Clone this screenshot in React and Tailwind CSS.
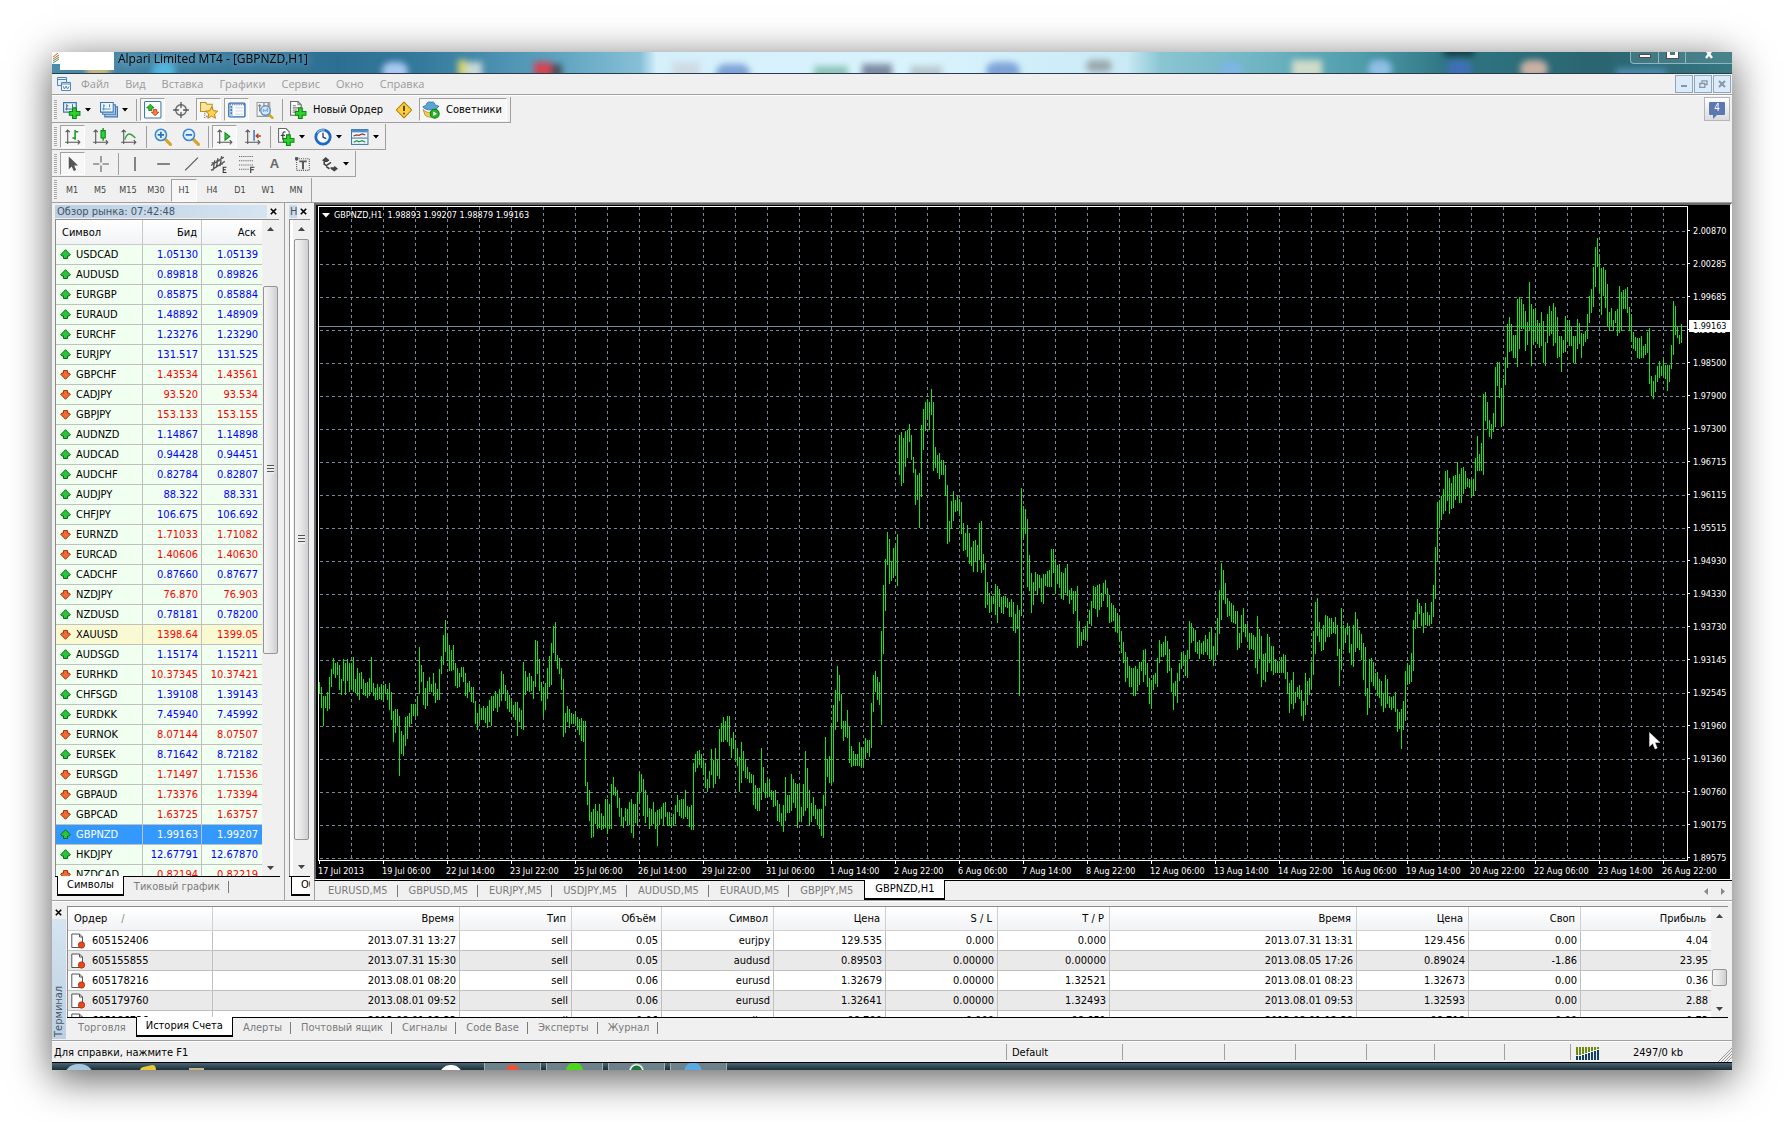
import { useState } from 'react';

const symbols = [
  ['USDCAD', '1.05130', '1.05139', 1],
  ['AUDUSD', '0.89818', '0.89826', 1],
  ['EURGBP', '0.85875', '0.85884', 1],
  ['EURAUD', '1.48892', '1.48909', 1],
  ['EURCHF', '1.23276', '1.23290', 1],
  ['EURJPY', '131.517', '131.525', 1],
  ['GBPCHF', '1.43534', '1.43561', 0],
  ['CADJPY', '93.520', '93.534', 0],
  ['GBPJPY', '153.133', '153.155', 0],
  ['AUDNZD', '1.14867', '1.14898', 1],
  ['AUDCAD', '0.94428', '0.94451', 1],
  ['AUDCHF', '0.82784', '0.82807', 1],
  ['AUDJPY', '88.322', '88.331', 1],
  ['CHFJPY', '106.675', '106.692', 1],
  ['EURNZD', '1.71033', '1.71082', 0],
  ['EURCAD', '1.40606', '1.40630', 0],
  ['CADCHF', '0.87660', '0.87677', 1],
  ['NZDJPY', '76.870', '76.903', 0],
  ['NZDUSD', '0.78181', '0.78200', 1],
  ['XAUUSD', '1398.64', '1399.05', 0],
  ['AUDSGD', '1.15174', '1.15211', 1],
  ['EURHKD', '10.37345', '10.37421', 0],
  ['CHFSGD', '1.39108', '1.39143', 1],
  ['EURDKK', '7.45940', '7.45992', 1],
  ['EURNOK', '8.07144', '8.07507', 0],
  ['EURSEK', '8.71642', '8.72182', 1],
  ['EURSGD', '1.71497', '1.71536', 0],
  ['GBPAUD', '1.73376', '1.73394', 0],
  ['GBPCAD', '1.63725', '1.63757', 0],
  ['GBPNZD', '1.99163', '1.99207', 1],
  ['HKDJPY', '12.67791', '12.67870', 1],
  ['NZDCAD', '0.82194', '0.82219', 0]
];

const orders = [
  ['605152406', '2013.07.31 13:27', 'sell', '0.05', 'eurjpy', '129.535', '0.000', '0.000', '2013.07.31 13:31', '129.456', '0.00', '4.04'],
  ['605155855', '2013.07.31 15:30', 'sell', '0.05', 'audusd', '0.89503', '0.00000', '0.00000', '2013.08.05 17:26', '0.89024', '-1.86', '23.95'],
  ['605178216', '2013.08.01 08:20', 'sell', '0.06', 'eurusd', '1.32679', '0.00000', '1.32521', '2013.08.01 08:23', '1.32673', '0.00', '0.36'],
  ['605179760', '2013.08.01 09:52', 'sell', '0.06', 'eurusd', '1.32641', '0.00000', '1.32493', '2013.08.01 09:53', '1.32593', '0.00', '2.88'],
  ['605186736', '2013.08.01 12:33', 'sell', '0.06', 'usdjpy', '98.790', '0.000', '98.651', '2013.08.01 12:38', '98.718', '0.00', '0.73']
];

const orderCols = ['Ордер', 'Время', 'Тип', 'Объём', 'Символ', 'Цена', 'S / L', 'T / P', 'Время', 'Цена', 'Своп', 'Прибыль'];
const orderWidths = ['w-[145px]', 'w-[247px]', 'w-[112px]', 'w-[90px]', 'w-[112px]', 'w-[112px]', 'w-[112px]', 'w-[112px]', 'w-[247px]', 'w-[112px]', 'w-[112px]', ''];

const prices = ['2.00870', '2.00285', '1.99685', '1.99085', '1.98500', '1.97900', '1.97300', '1.96715', '1.96115', '1.95515', '1.94930', '1.94330', '1.93730', '1.93145', '1.92545', '1.91960', '1.91360', '1.90760', '1.90175', '1.89575'];

const times = ['17 Jul 2013', '19 Jul 06:00', '22 Jul 14:00', '23 Jul 22:00', '25 Jul 06:00', '26 Jul 14:00', '29 Jul 22:00', '31 Jul 06:00', '1 Aug 14:00', '2 Aug 22:00', '6 Aug 06:00', '7 Aug 14:00', '8 Aug 22:00', '12 Aug 06:00', '13 Aug 14:00', '14 Aug 22:00', '16 Aug 06:00', '19 Aug 14:00', '20 Aug 22:00', '22 Aug 06:00', '23 Aug 14:00', '26 Aug 22:00'];

// high-low of every bar, in 0.8 pip steps below 2.0143
const quotes = `
1080-1107 1092-1137 1110-1178 1110-1138 1102-1145 1068-1140 1050-1092 1026-1062 1037-1070 1035-1063
1042-1098 1074-1108 1028-1078 1037-1108 1028-1078 1037-1103 1037-1095 1024-1103 1074-1105 1048-1110
1060-1121 1057-1095 1072-1108 1082-1110 1080-1115 1071-1110 1024-1103 1082-1110 1093-1121 1084-1121
1091-1117 1084-1119 1087-1124 1084-1107 1096-1121 1082-1142 1102-1165 1145-1214 1140-1194 1140-1178
1156-1290 1190-1240 1198-1245 1158-1222 1156-1207 1150-1180 1128-1174 1130-1156 1130-1158 1110-1155
1002-1107 1042-1080 1058-1131 1093-1140 1078-1133 1068-1103 1085-1103 1060-1110 1083-1127 1096-1121
1050-1121 1022-1062 974-1042 941-1012 972-1032 997-1054 1008-1055 997-1052 1038-1088 1048-1093
1060-1091 1046-1068 1046-1080 1060-1110 1082-1115 1077-1103 1091-1124 1091-1127 1122-1174 1150-1187
1130-1172 1138-1165 1133-1165 1138-1172 1133-1183 1120-1170 1112-1178 1112-1145 1100-1138 1107-1147
1096-1135 1055-1122 1062-1107 1087-1122 1098-1140 1109-1147 1115-1147 1131-1158 1124-1165 1124-1200
1138-1170 1142-1185 1035-1188 1055-1108 1068-1100 1060-1102 1067-1100 1077-1118 986-1090 988-1062
1028-1100 1080-1122 1091-1158 1082-1142 1048-1118 1022-1090 992-1087 954-1015 946-1032 1020-1050
1027-1062 1048-1097 1072-1202 1150-1195 1133-1170 1140-1183 1150-1174 1152-1174 1149-1174 1158-1187
1163-1198 1160-1212 1167-1214 1167-1312 1304-1355 1322-1390 1370-1430 1364-1427 1353-1398 1368-1410
1353-1407 1373-1412 1380-1408 1342-1407 1342-1420 1353-1410 1308-1408 1292-1333 1315-1335 1322-1362
1340-1382 1362-1403 1382-1407 1362-1390 1364-1400 1348-1400 1342-1418 1353-1430 1353-1395 1326-1402
1282-1353 1285-1325 1298-1380 1322-1395 1333-1382 1362-1408 1364-1400 1348-1398 1370-1410 1367-1446
1364-1400 1360-1387 1351-1402 1348-1382 1370-1402 1370-1403 1382-1407 1375-1403 1355-1398 1333-1370
1344-1380 1342-1385 1342-1387 1322-1382 1357-1387 1360-1405 1355-1412 1262-1412 1240-1282 1235-1272
1232-1265 1240-1272 1251-1287 1262-1317 1297-1327 1278-1317 1230-1287 1255-1318 1228-1308 1255-1290
1185-1297 1172-1215 1158-1215 1167-1210 1156-1215 1156-1222 1205-1250 1192-1230 1210-1252 1227-1268
1248-1327 1214-1305 1235-1278 1252-1295 1270-1297 1282-1305 1285-1305 1288-1355 1310-1364 1318-1368
1317-1368 1228-1343 1270-1327 1307-1340 1298-1337 1298-1337 1322-1343 1324-1360 1322-1357 1343-1392
1353-1393 1373-1403 1355-1415 1292-1392 1333-1373 1332-1373 1286-1368 1298-1350 1305-1362 1308-1406
1305-1390 1360-1393 1308-1380 1234-1368 1272-1363 1322-1402 1350-1393 1337-1380 1355-1387 1364-1400
1364-1408 1364-1425 1332-1430 1203-1357 1252-1293 1245-1305 1180-1308 1131-1303 1098-1188 1044-1170
1064-1122 1107-1185 1167-1212 1167-1203 1142-1205 1180-1262 1222-1270 1235-1268 1240-1268 1242-1267
1214-1268 1225-1272 1228-1270 1205-1253 1210-1238 1210-1248 1127-1228 1064-1147 1055-1102 1068-1120
1080-1131 965-1176 862-1018 804-920 744-818 760-860 810-853 780-847 775-840 748-864
526-617 520-640 533-633 517-597 515-578 502-542 526-582 576-612 602-683 617-672
612-735 504-665 468-560 452-517 445-490 452-515 423-482 452-607 553-600 571-612
567-625 582-617 582-615 594-662 638-770 718-766 674-738 652-720 672-700 664-697
670-703 677-748 724-786 746-785 728-800 746-815 777-820 764-833 762-810 773-833
724-806 719-836 793-828 813-915 856-908 880-925 887-922 887-905 860-930 865-948
871-912 889-925 887-927 887-912 892-915 900-935 893-935 900-965 927-970 908-962
918-1110 645-932 685-758 692-748 715-867 795-876 836-925 856-908 833-875 838-885
840-870 847-900 838-905 838-865 831-867 829-867 782-867 782-836 804-882 818-860
815-870 833-893 836-895 824-880 815-887 874-905 869-895 876-927 876-920 865-1004
942-1000 967-1000 960-985 954-987 942-985 918-950 898-955 865-915 867-917 862-934
860-918 880-912 858-898 851-882 869-912 885-948 903-945 908-942 915-968 925-970
932-990 965-1015 990-1037 1012-1080 1024-1070 1044-1092 1048-1090 1048-1112 1044-1112 1050-1100
1035-1087 1035-1055 1008-1080 1006-1065 1038-1092 1070-1130 1075-1140 1065-1097 1060-1085 1026-1090
986-1037 995-1024 990-1024 977-1020 988-1060 1006-1055 1048-1102 1083-1142 1077-1110 1060-1127
1037-1077 1012-1050 1015-1042 1020-1067 1008-1070 942-1028 948-992 958-987 963-1012 990-1018
986-1028 992-1018 988-1020 974-1012 983-1020 968-1028 956-1030 999-1044 977-1028 936-1020
874-972 813-940 829-895 858-905 892-935 898-932 903-945 907-948 920-950 920-1007
970-1004 930-992 914-968 950-980 950-988 970-1007 970-1005 974-1008 980-1048 932-1062
962-1028 977-1092 1018-1075 1015-1080 972-1057 979-1037 999-1055 999-1065 1028-1060 1033-1060
1033-1060 1024-1060 1017-1060 1020-1073 1058-1107 1082-1148 1075-1130 1058-1140 1102-1127 1091-1113
1086-1117 1098-1156 1122-1168 1060-1154 1078-1131 1071-1108 1035-1095 965-1064 900-1018 892-977
945-990 962-1010 952-1007 930-990 932-980 936-980 936-972 945-970 934-972 952-1022
1006-1088 914-1053 952-1007 958-992 948-975 954-1015 995-1042 952-1046 923-1012 939-1004
963-1007 972-1030 992-1075 1001-1110 1093-1154 1028-1138 1026-1080 1035-1088 1060-1093 1057-1110
1072-1115 1077-1133 1104-1146 1064-1138 1072-1128 1112-1138 1113-1142 1112-1138 1102-1147 1140-1192
1147-1185 1140-1229 1122-1187 1055-1168 1037-1086 1042-1085 1015-1080 940-1055 923-962 894-958
903-927 909-955 925-970 903-952 923-954 930-955 900-950 862-934 777-893 676-812
672-730 663-717 647-703 608-697 605-675 623-703 634-692 618-690 617-672 587-662
613-679 600-679 598-658 607-647 623-642 625-645 628-668 625-662 578-652 529-608
569-608 544-607 435-615 430-495 452-512 493-530 502-535 478-520 374-508 363-417
363-443 421-508 400-503 352-414 278-376 262-340 278-338 302-353 302-353 222-374
217-333 221-290 233-288 249-338 273-325 184-293 233-372 244-325 242-317 269-322
276-332 251-327 271-366 318-372 255-320 237-305 249-300 231-327 240-320 262-355
305-352 305-385 314-343 260-340 269-316 269-328 284-327 305-366 304-366 267-333
276-322 298-353 300-327 293-318 255-311 215-275 199-253 150-240 105-195 85-150
121-208 152-258 150-215 157-242 188-282 251-293 242-282 269-293 249-276 244-305
193-297 206-293 202-244 199-244 195-253 240-293 255-318 296-333 307-338 309-355
309-357 305-355 327-353 323-348 296-343 287-413 394-440 405-445 392-430 372-407
361-398 372-395 357-395 370-402 370-427 370-407 325-378 226-348 237-302 282-308
302-322 278-320`;

const toY = (v) => Math.round(v / 2.24) - 7;

const barsPath = quotes
  .trim()
  .split(/\s+/)
  .map((q, i) => {
    const [high, low] = q.split('-');
    return `M${i * 2 + 0.5} ${toY(high)}V${toY(low)}`;
  })
  .join('');

function Svg({ children }) {
  return (
    <svg width="18" height="18" viewBox="0 0 17 17" fill="none" aria-hidden="true" className="shrink-0">
      {children}
    </svg>
  );
}

const plus = <path d="M9 6.500h3.500v3.500h3.500v3.500h-3.500v3h-3.500v-3h-3v-3.500h3z" fill="#2fd12f" stroke="#0a8a12" />;

const icons = {
  newChart: (
    <Svg>
      <path d="M.5 1.500h12v9h-12z" fill="#e9f3fb" stroke="#3b78ad" strokeWidth="1.200" />
      <path d="M3.500 3v6M2 7.500h8M3 4.500h2M9 3v3" stroke="#3f6f9c" />
      {plus}
    </Svg>
  ),
  profiles: (
    <Svg>
      <path d="M4.500 5.500h12v9.500h-12z" fill="#a9cbe8" stroke="#3b78ad" />
      <path d="M2.500 3.500h12v9h-12z" fill="#c8dff1" stroke="#3b78ad" />
      <path d="M.5 1.500h12v9h-12z" fill="#eef6fc" stroke="#3b78ad" />
      <path d="M3.500 3v6M2 7.500h8M3 4.500h2M9 3v3" stroke="#5f8fb8" />
    </Svg>
  ),
  market: (
    <Svg>
      <rect x=".5" y=".5" width="15.500" height="15.500" rx="1" fill="#fff" stroke="#3b78ad" />
      <path d="M6 3l3.500 3.500H7.500V9h-3V6.500h-2z" fill="#2fc52f" stroke="#0a7a12" strokeWidth=".8" />
      <path d="M10.500 14L7 10.500h2V8h3v2.500h2z" fill="#ff7a45" stroke="#c43a10" strokeWidth=".8" />
    </Svg>
  ),
  crosshair: (
    <Svg>
      <circle cx="8.500" cy="8.500" r="5" stroke="#666" strokeWidth="1.300" />
      <path d="M8.500 1v5.500M8.500 10.500V16M1 8.500h5.500M10.500 8.500H16" stroke="#555" strokeWidth="1.200" />
    </Svg>
  ),
  favorites: (
    <Svg>
      <path d="M.5 3V1.500h5l1 1.500h5v7h-11z" fill="#fbe69a" stroke="#b89030" />
      <path d="M4.500 11v6M6 14.500h2" stroke="#555" strokeDasharray="1 1" />
      <path d="M11 5.500l1.700 3.700 4 .4-3 2.700.9 4-3.600-2.100-3.600 2.100.9-4-3-2.700 4-.4z" fill="#ffd44a" stroke="#b87a10" strokeWidth=".9" />
    </Svg>
  ),
  navigator: (
    <Svg>
      <rect x=".8" y="2" width="15.200" height="13" rx="1" fill="#fff" stroke="#2a6cb4" strokeWidth="1.300" />
      <path d="M1.500 4.500h3v10h-3z" fill="#a8cbee" />
      <path d="M2.500 5.500h1M2.500 8.500h1M2.500 11.500h1" stroke="#102a50" strokeWidth="1.200" />
      <path d="M6.500 6.500h8M6.500 9.500h8M6.500 12.500h8" stroke="#ccdcec" />
      <path d="M2 3.500h13" stroke="#1d3f70" strokeDasharray="1 1" />
    </Svg>
  ),
  tester: (
    <Svg>
      <path d="M1 1.500h12v13H1z" fill="#f4f4f4" stroke="#999" />
      <path d="M3.500 3v7M2 4.500h3M7.500 2v3M11.500 2v4" stroke="#777" />
      <path d="M12 12.500l3.500 3.500" stroke="#d9a520" strokeWidth="2.400" strokeLinecap="round" />
      <circle cx="9" cy="9" r="4.500" fill="#cfe5f8" fillOpacity=".85" stroke="#5b93c7" strokeWidth="1.300" />
      <path d="M7 10.500V8l2 1.500 2-2.500v3.500" stroke="#7ba6d0" />
    </Svg>
  ),
  newOrder: (
    <Svg>
      <path d="M1.500.5h7l3 3v10h-10z" fill="#fff" stroke="#666" />
      <path d="M8.500.5v3h3M3.500 4.500h3M3.500 6.500h6M3.500 8.500h4M3.500 10.500h3" stroke="#777" />
      {plus}
    </Svg>
  ),
  warning: (
    <Svg>
      <path d="M8.500 1l7.300 7.500-7.300 7.500L1.200 8.500z" fill="#ffcf33" stroke="#a87a10" strokeLinejoin="round" />
      <path d="M8.500 4.500v5M8.500 11v1.500" stroke="#333" strokeWidth="1.600" />
    </Svg>
  ),
  experts: (
    <Svg>
      <path d="M1 8c3 3.500 8 4 13 0l1.500 4.500c-2 3-9 4-12.500 1z" fill="#f0cf62" stroke="#b18b26" strokeWidth=".8" />
      <path d="M.8 5.500C2 4.500 3.500 4.800 4 3.500 4.600.8 7 .5 8.500 1.200 10 .4 12 1 12.300 3.500c.7 1 2.500.6 3.500 1.300-1 4.200-12.500 5-15 .7z" fill="#5aa5d8" stroke="#28709f" strokeWidth=".8" />
      <circle cx="12" cy="12" r="4.200" fill="#27b327" stroke="#108010" />
      <path d="M10.700 9.800v4.400l3.500-2.200z" fill="#fff" />
    </Svg>
  ),
  bars: (
    <Svg>
      <path d="M3.500 15V2M1.500 4l2-2 2 2M1 13.500h13M13 11.500l2 2-2 2" stroke="#555" />
      <path d="M10.500 2v9M10.500 3.500h3M8 9.500h2.500" stroke="#0d9a1d" strokeWidth="1.400" />
    </Svg>
  ),
  candles: (
    <Svg>
      <path d="M3.500 15V2M1.500 4l2-2 2 2M1 13.500h13M13 11.500l2 2-2 2" stroke="#555" />
      <path d="M10.500 0v12" stroke="#0b7a16" strokeWidth="1.200" />
      <path d="M8.500 2.500h4v7h-4z" fill="#32d13d" stroke="#0b8a16" />
    </Svg>
  ),
  line: (
    <Svg>
      <path d="M3.500 15V2M1.500 4l2-2 2 2M1 13.500h13M13 11.500l2 2-2 2" stroke="#555" />
      <path d="M4.500 11c2-6 4.500-7.500 10-1.500" stroke="#2ba23a" strokeWidth="1.300" />
    </Svg>
  ),
  zoomIn: (
    <Svg>
      <path d="M10.500 10.500l5 5" stroke="#d8a32a" strokeWidth="3" strokeLinecap="round" />
      <circle cx="6.500" cy="6.500" r="5.300" fill="#dff0ff" stroke="#3f87cf" strokeWidth="1.500" />
      <path d="M3.500 6.500h6M6.500 3.500v6" stroke="#2a70bd" strokeWidth="1.600" />
    </Svg>
  ),
  zoomOut: (
    <Svg>
      <path d="M10.500 10.500l5 5" stroke="#d8a32a" strokeWidth="3" strokeLinecap="round" />
      <circle cx="6.500" cy="6.500" r="5.300" fill="#dff0ff" stroke="#3f87cf" strokeWidth="1.500" />
      <path d="M3.500 6.500h6" stroke="#2a70bd" strokeWidth="1.600" />
    </Svg>
  ),
  autoScroll: (
    <Svg>
      <path d="M3.500 15V2M1.500 4l2-2 2 2M1 13.500h13M13 11.500l2 2-2 2" stroke="#555" />
      <path d="M8.500 4.500v7l4.500-3.500z" fill="#3dc54a" stroke="#0b8a16" />
    </Svg>
  ),
  shift: (
    <Svg>
      <path d="M3.500 15V2M1.500 4l2-2 2 2M1 13.500h13M13 11.500l2 2-2 2" stroke="#555" />
      <path d="M9.500 2v10" stroke="#2a6cb4" strokeWidth="1.300" />
      <path d="M16 7.500h-4M13.500 5.500l-2 2 2 2" stroke="#b8431b" strokeWidth="1.300" />
    </Svg>
  ),
  indicators: (
    <Svg>
      <path d="M1.500.5h7l3 3v10h-10z" fill="#fff" stroke="#666" />
      <path d="M8 4c-2-.8-2.500.5-2.500 2v5M3.500 7h4" stroke="#444" strokeWidth="1.200" />
      {plus}
    </Svg>
  ),
  clock: (
    <Svg>
      <circle cx="8.500" cy="8.500" r="6.800" fill="#f3f9ff" stroke="#1d6ac4" strokeWidth="2.600" />
      <path d="M8.500 4.500v4l3 1.500" stroke="#333" strokeWidth="1.200" />
      <path d="M3 5a6.500 6.500 0 0 1 7-3" stroke="#8fc4f5" />
    </Svg>
  ),
  template: (
    <Svg>
      <rect x=".5" y="1.500" width="15.500" height="14" fill="#f2f8fd" stroke="#3b78ad" />
      <path d="M1 3h14.500" stroke="#4d8fce" strokeWidth="2.200" />
      <path d="M1 9.500h14.500" stroke="#3b78ad" />
      <path d="M2.500 7.500l3-1 2 .5 3-1.500 3 1" stroke="#a33a20" strokeWidth="1.200" />
      <path d="M2.500 13.500l3-1.500 2 1 3-1 3 1.500" stroke="#1f8f3c" strokeWidth="1.200" />
    </Svg>
  ),
  pointer: (
    <Svg>
      <path d="M4.500 1.500v12l2.800-2.600 1.900 4.300 2.300-1-1.900-4.200h3.700z" fill="#555" />
    </Svg>
  ),
  cross: (
    <Svg>
      <path d="M8.500 1v6M8.500 10v6M1 8.500h6M10 8.500h6" stroke="#555" />
    </Svg>
  ),
  vline: (
    <Svg>
      <path d="M8.500 2v13" stroke="#444" strokeWidth="1.200" />
    </Svg>
  ),
  hline: (
    <Svg>
      <path d="M3 8.500h12" stroke="#444" strokeWidth="1.200" />
    </Svg>
  ),
  trend: (
    <Svg>
      <path d="M3 14.500L15 2.500" stroke="#555" strokeWidth="1.100" />
    </Svg>
  ),
  channel: (
    <Svg>
      <path d="M1 10L13 2M1 14.500L14 6M4.500 5l-1.500 9.500M7.500 3L6 12M11 1L9.500 10.500M1.500 7.500h3M6 5.500h3M9 8.500h3" stroke="#555" strokeWidth="1.200" />
      <path d="M15.500 11.500H12.500v5h3M12.500 14h2.500" stroke="#333" />
    </Svg>
  ),
  fibo: (
    <Svg>
      <path d="M1 1.500h14M1 5.500h14M1 9.500h14M1 13.500h9" stroke="#555" strokeDasharray="1 1" />
      <path d="M15.500 11.500h-3.500V17M12 14h3" stroke="#333" />
    </Svg>
  ),
  textLabel: (
    <Svg>
      <path d="M2.500 3.500h12v11h-12z" stroke="#555" strokeDasharray="1 1" />
      <path d="M1 2h3v3h-3z" fill="#555" />
      <path d="M5 6h7M8.500 6v7.500" stroke="#555" strokeWidth="1.800" />
    </Svg>
  ),
  arrows: (
    <Svg>
      <path d="M1 5l3.500-3L8 5 6 6.500H3zM9 11.500h3l1-1 3 2.500-3.500 2.500-3.500-2.500z" fill="#444" />
      <path d="M3 6.500v2l2 1.500 4.500-3M8 13l-3-2" stroke="#444" strokeWidth="1.500" />
    </Svg>
  )
};

function Caret() {
  return (
    <svg width="6" height="4" viewBox="0 0 6 4" aria-hidden="true" className="shrink-0">
      <path d="M0 0h6L3 3.500z" fill="#000" />
    </svg>
  );
}

function Tool({ name, label, active }) {
  return (
    <button
      type="button"
      aria-label={label}
      className={`${active ? 'border-[#a0a0a0] border-r-white border-b-white bg-[#f7f7f7]' : 'border-transparent'} mr-[3px] flex h-[23px] w-[25px] items-center justify-center border`}
    >
      {icons[name]}
    </button>
  );
}

function DropTool({ name, label }) {
  return (
    <button type="button" aria-label={label} className="flex h-[23px] w-[37px] items-center gap-[4px] pl-[3px]">
      {icons[name]}
      <Caret />
    </button>
  );
}

function Sep() {
  return <span className="mr-[3px] ml-[2px] h-[22px] w-px bg-[#a0a0a0]" />;
}

function Toolbar({ label, children }) {
  return (
    <div role="toolbar" aria-label={label} className="mb-px flex h-[26px] w-fit items-center border-r border-b border-[#a0a0a0]">
      <span className="mr-[3px] ml-[2px] h-[20px] w-[3px] bg-[repeating-linear-gradient(to_bottom,#a8a8a8_0_1px,#f0f0f0_1px_2px)]" />
      {children}
    </div>
  );
}

function CloseMark({ label }) {
  return (
    <button type="button" aria-label={label} className="flex h-[13px] w-[13px] shrink-0 items-center justify-center">
      <svg width="7" height="7" viewBox="0 0 7 7" aria-hidden="true">
        <path d="M.8.8l5.400 5.400M6.200.8L.8 6.200" stroke="#000" strokeWidth="1.600" />
      </svg>
    </button>
  );
}

function TrendArrow({ up }) {
  return (
    <svg width="11" height="11" viewBox="0 0 11 11" aria-hidden="true" className={up ? 'shrink-0' : 'shrink-0 rotate-180'}>
      <path d="M5.500.7L10.400 5.800 9 7H7.500v2.500h-4V7H2L.6 5.800z" fill={up ? '#2cc43c' : '#f06a35'} stroke={up ? '#0c6d18' : '#a8300c'} />
    </svg>
  );
}

function Scrollbar({ before, thumb, after, grip }) {
  return (
    <div className="flex w-[17px] shrink-0 flex-col items-center bg-[#f0f0f0]">
      <span className="flex h-[17px] items-center">
        <svg width="7" height="4" viewBox="0 0 7 4" aria-hidden="true">
          <path d="M0 4h7L3.500 0z" fill="#444" />
        </svg>
      </span>
      <span className={before} />
      <span className={`${thumb} flex w-[15px] flex-col items-center justify-center gap-px rounded-[2px] border border-[#959595] bg-linear-to-r from-[#f5f5f5] via-[#e6e6e8] to-[#cfcfd3]`}>
        {grip ? (
          <span className="h-[9px] w-[7px] bg-[repeating-linear-gradient(to_bottom,#555_0_1px,#eee_1px_3px)]" />
        ) : null}
      </span>
      <span className={after} />
      <span className="flex h-[17px] items-center">
        <svg width="7" height="4" viewBox="0 0 7 4" aria-hidden="true">
          <path d="M0 0h7L3.500 4z" fill="#444" />
        </svg>
      </span>
    </div>
  );
}

function Tabs({ items, value, onChange, label, wide }) {
  return (
    <div role="tablist" aria-label={label} className="flex h-[19px] shrink-0 gap-px">
      {items.map((t, i) => {
        const active = t === value;
        const nextActive = items[i + 1] === value;
        return (
          <button
            key={t}
            type="button"
            role="tab"
            aria-selected={active}
            onClick={() => onChange(t)}
            className={`${active ? '-mt-px h-[20px] border-x border-b-2 border-black bg-white text-black' : 'h-[20px] text-[#7a7a7a]'} ${wide ? 'px-[10px]' : 'px-[9px]'} relative flex shrink-0 items-center whitespace-nowrap`}
          >
            {t}
            {!active && !nextActive ? <span className="absolute top-[4px] right-0 h-[12px] w-px bg-[#7a7a7a]" /> : null}
          </button>
        );
      })}
    </div>
  );
}

function TitleBar() {
  return (
    <header className="relative flex h-[22px] shrink-0 items-start overflow-hidden border-b border-[#2b3b4d]">
      <div className="absolute inset-0 bg-[linear-gradient(to_right,#4a8ba9_0%,#2d6f93_17%,#337a9c_22%,#5ea2c0_30%,#86c0d6_35%,#d5f0fb_36%,#d9f3fd_52%,#c9eaf5_64%,#8ac5d2_66%,#6fb4c3_72%,#4f9cab_78%,#2f7684_83%,#2a6570_92%,#367782_100%)]" />
      <div className="absolute inset-0 blur-[3px]">
        <span className="absolute top-[10px] left-[330px] h-[18px] w-[26px] rounded-full bg-[#a9c9f2]" />
        <span className="absolute top-[10px] left-[100px] h-[18px] w-[24px] rounded-full bg-[#4fb6e0]" />
        <span className="absolute top-[12px] left-[34px] h-[14px] w-[24px] bg-[#c7b777]" />
        <span className="absolute top-[8px] left-[406px] h-[18px] w-[8px] bg-[#d8d36c]" />
        <span className="absolute top-[10px] left-[414px] h-[18px] w-[16px] bg-[#c9d8d8]" />
        <span className="absolute top-[10px] left-[482px] h-[18px] w-[18px] bg-[#d24552]" />
        <span className="absolute top-[12px] left-[500px] h-[18px] w-[10px] bg-[#44545e]" />
        <span className="absolute top-[10px] left-[620px] h-[18px] w-[28px] bg-[#cfdbe4]" />
        <span className="absolute top-[12px] left-[664px] h-[18px] w-[34px] rounded-full bg-[#7fa3d8]" />
        <span className="absolute top-[14px] left-[762px] h-[14px] w-[34px] bg-[#8fc5b8]" />
        <span className="absolute top-[12px] left-[810px] h-[18px] w-[30px] bg-[#7d8ba3]" />
        <span className="absolute top-[14px] left-[858px] h-[14px] w-[32px] bg-[#b9c8cf]" />
        <span className="absolute top-[10px] left-[934px] h-[18px] w-[34px] rounded-full bg-[#7fa3d8]" />
        <span className="absolute top-[8px] left-[1034px] h-[12px] w-[26px] rounded-full bg-[#9aa9ae]" />
        <span className="absolute top-[10px] left-[1168px] h-[18px] w-[22px] rounded-full bg-[#7db6e6]" />
        <span className="absolute top-[8px] left-[1240px] h-[18px] w-[30px] bg-[#cfdcc8]" />
        <span className="absolute top-[8px] left-[1316px] h-[18px] w-[24px] rounded-full bg-[#8fc0e6]" />
        <span className="absolute -top-[6px] left-[1392px] h-[10px] w-[30px] bg-[#123c44]" />
        <span className="absolute top-[8px] left-[1394px] h-[18px] w-[26px] rounded-full bg-[#3f6fb5]" />
        <span className="absolute top-[8px] left-[1468px] h-[18px] w-[28px] rounded-full bg-[#c9b0a4]" />
        <span className="absolute top-[16px] left-[1564px] h-[10px] w-[50px] bg-[#4d8cb0]" />
      </div>
      <svg width="8" height="12" viewBox="0 0 8 12" aria-hidden="true" className="relative bg-white">
        <path d="M1 5l5-4M1 7l6-4" stroke="#d9533a" />
        <path d="M1 9l6-4M1 11l6-4" stroke="#4a9a3c" />
      </svg>
      <span className="relative h-[18px] w-[54px] bg-white" />
      <h1 className="relative pl-[4px] font-['Open_Sans','Noto_Sans',sans-serif] text-[12px] leading-[14px] whitespace-nowrap text-black [text-shadow:0_0_8px_#b9dbea]">
        Alpari Limited MT4 - [GBPNZD,H1]
      </h1>
      <div className="relative ml-auto flex h-[12px] overflow-hidden rounded-bl-[4px] border-b border-l border-[#8fb6ba] bg-[#ffffff18] text-white">
        <button type="button" aria-label="Свернуть окно" className="flex w-[28px] justify-center border-r border-[#8fb6ba]">
          <span className="mt-[2px] h-[4px] w-[12px] border border-[#55475a] bg-white" />
        </button>
        <button type="button" aria-label="Развернуть окно" className="flex w-[27px] justify-center border-r border-[#8fb6ba]">
          <span className="-mt-[3px] h-[9px] w-[11px] border-[3px] border-white outline outline-[#55475a]" />
        </button>
        <button type="button" aria-label="Закрыть окно" className="flex w-[46px] justify-center">
          <svg width="10" height="8" viewBox="0 0 10 8" aria-hidden="true">
            <path d="M2-2l6 8M8-2L2 6" stroke="#fff" strokeWidth="2.400" />
          </svg>
        </button>
      </div>
    </header>
  );
}

function MenuBar() {
  const menu = ['Файл', 'Вид', 'Вставка', 'Графики', 'Сервис', 'Окно', 'Справка'];
  return (
    <nav className="flex h-[21px] shrink-0 items-center border-b border-[#a0a0a0] pr-px pl-[5px] font-['Open_Sans','Noto_Sans',sans-serif] text-[11px] text-[#9a9a9a]">
      <svg width="14" height="14" viewBox="0 0 14 14" fill="none" aria-hidden="true" className="mr-[2px]">
        <path d="M.5.5h9v8h-9z" fill="#e6f1fb" stroke="#4d87bd" />
        <path d="M4.500 5.500h9v8h-9z" fill="#fff" stroke="#4d87bd" />
        <path d="M.5 2.500h9M4.500 7h9" stroke="#4d87bd" />
        <path d="M6 9l1.500 3L9 9l1.500 3L12 9.500" stroke="#4d87bd" />
      </svg>
      {menu.map((m) => (
        <button key={m} type="button" className="px-[8px]">
          {m}
        </button>
      ))}
      <div className="ml-auto flex gap-px">
        <button type="button" aria-label="Свернуть" className="flex h-[18px] w-[18px] items-center justify-center border border-[#8fa6bd] bg-[#dcebfa]">
          <span className="mt-[4px] h-[2px] w-[6px] bg-[#8496a9]" />
        </button>
        <button type="button" aria-label="Восстановить" className="flex h-[18px] w-[18px] items-center justify-center border border-[#8fa6bd] bg-[#dcebfa]">
          <svg width="9" height="8" viewBox="0 0 9 8" fill="none" aria-hidden="true">
            <path d="M3 3V.8h5v3.700H6M.8 3.500h5V7.300h-5z" stroke="#8496a9" strokeWidth="1.300" />
          </svg>
        </button>
        <button type="button" aria-label="Закрыть" className="flex h-[18px] w-[18px] items-center justify-center border border-[#8fa6bd] bg-[#dcebfa]">
          <svg width="8" height="8" viewBox="0 0 8 8" aria-hidden="true">
            <path d="M1 1l6 6M7 1L1 7" stroke="#8496a9" strokeWidth="2" />
          </svg>
        </button>
      </div>
    </nav>
  );
}

function Toolbars() {
  const [period, setPeriod] = useState('H1');
  return (
    <div className="flex shrink-0 items-start justify-between border-t border-white pt-px">
      <div>
        <Toolbar label="Стандартная">
          <DropTool name="newChart" label="Новый график" />
          <DropTool name="profiles" label="Профили" />
          <Sep />
          <Tool name="market" label="Обзор рынка" active />
          <Tool name="crosshair" label="Окно данных" />
          <Tool name="favorites" label="Навигатор" active />
          <Tool name="navigator" label="Терминал" active />
          <Tool name="tester" label="Тестер стратегий" />
          <Sep />
          <button type="button" className="mr-[3px] flex h-[23px] w-[102px] items-center gap-[6px] pl-[3px] whitespace-nowrap">
            {icons.newOrder}
            Новый Ордер
          </button>
          <Tool name="warning" label="MetaEditor" />
          <button type="button" className="mr-[3px] flex h-[23px] w-[88px] items-center gap-[6px] border border-[#a0a0a0] border-r-white border-b-white bg-[#f7f7f7] pl-[2px] whitespace-nowrap">
            {icons.experts}
            Советники
          </button>
        </Toolbar>
        <Toolbar label="Графики">
          <Tool name="bars" label="Бары" active />
          <Tool name="candles" label="Японские свечи" />
          <Tool name="line" label="Линия" />
          <Sep />
          <Tool name="zoomIn" label="Увеличить" />
          <Tool name="zoomOut" label="Уменьшить" />
          <Sep />
          <Tool name="autoScroll" label="Автопрокрутка" active />
          <Tool name="shift" label="Сдвиг графика" />
          <Sep />
          <DropTool name="indicators" label="Индикаторы" />
          <DropTool name="clock" label="Периоды" />
          <DropTool name="template" label="Шаблоны" />
        </Toolbar>
        <Toolbar label="Графические инструменты">
          <Tool name="pointer" label="Курсор" active />
          <Tool name="cross" label="Перекрестие" />
          <Sep />
          <Tool name="vline" label="Вертикальная линия" />
          <Tool name="hline" label="Горизонтальная линия" />
          <Tool name="trend" label="Трендовая линия" />
          <Tool name="channel" label="Канал" />
          <Tool name="fibo" label="Линии Фибоначчи" />
          <button type="button" className="mr-[3px] h-[23px] w-[25px] font-['Liberation_Sans',sans-serif] text-[13px] font-bold text-[#666]">
            A
          </button>
          <Tool name="textLabel" label="Текстовая метка" />
          <DropTool name="arrows" label="Стрелки" />
        </Toolbar>
        <div role="toolbar" aria-label="Период" className="flex h-[24px] w-fit items-center border-r border-[#a0a0a0]">
          <span className="mr-[2px] ml-[2px] h-[20px] w-[3px] bg-[repeating-linear-gradient(to_bottom,#a8a8a8_0_1px,#f0f0f0_1px_2px)]" />
          {['M1', 'M5', 'M15', 'M30', 'H1', 'H4', 'D1', 'W1', 'MN'].map((p) => (
            <button
              key={p}
              type="button"
              onClick={() => setPeriod(p)}
              className={`${period === p ? 'border-[#a0a0a0] border-r-white border-b-white bg-[#f7f7f7]' : 'border-transparent'} mr-[2px] h-[23px] w-[26px] border text-[9px] text-[#444]`}
            >
              {p}
            </button>
          ))}
        </div>
      </div>
      <button type="button" aria-label="Сообщения: 4" className="mr-[2px] flex h-[24px] w-[26px] items-center justify-center border border-[#b4b4bc] bg-linear-to-b from-white to-[#dcdcdc]">
        <span className="relative -mt-[2px] flex h-[13px] w-[16px] items-center justify-center rounded-[1px] bg-[#5b78b3] text-[10px] leading-none text-white">
          4
          <span className="absolute top-full left-[4px] border-t-4 border-r-4 border-t-[#5b78b3] border-r-transparent" />
        </span>
      </button>
    </div>
  );
}

function MarketWatch() {
  const [tab, setTab] = useState('Символы');
  return (
    <section className="flex w-[233px] shrink-0 flex-col border-r border-[#a0a0a0] pt-[2px] pr-[4px] pl-[3px]">
      <div className="flex h-[13px] shrink-0 items-center justify-between">
        <h2 className="h-full flex-1 bg-linear-to-r from-[#bccfe0] to-[#d6e4f2] pl-[2px] leading-[13px] text-[#44546a]">Обзор рынка: 07:42:48</h2>
        <CloseMark label="Закрыть обзор рынка" />
      </div>
      <div className="mt-px mr-px flex min-h-0 flex-1 border-t border-l border-[#8c8c8c]">
        <div className="min-w-0 flex-1 overflow-hidden">
          <table className="w-full table-fixed border-separate border-spacing-0">
            <thead>
              <tr className="bg-linear-to-b from-white to-[#f0f2f5]">
                <th className="h-[25px] w-[87px] border-r border-b border-[#c8c8c8] pt-[2px] pl-[6px] text-left font-normal">Символ</th>
                <th className="w-[59px] border-r border-b border-[#c8c8c8] pt-[2px] pr-[4px] text-right font-normal">Бид</th>
                <th className="border-b border-[#c8c8c8] pt-[2px] pr-[6px] text-right font-normal">Аск</th>
              </tr>
            </thead>
            <tbody>
              {symbols.map(([name, bid, ask, up]) => {
                const selected = name === 'GBPNZD';
                const bg = selected ? 'bg-[#3399ff]' : name === 'XAUUSD' ? 'bg-[#fafad2]' : 'bg-[#f0fff0]';
                const color = selected ? 'text-white' : up ? 'text-[#0000ff]' : 'text-[#ff0000]';
                return (
                  <tr key={name} className={bg}>
                    <td className={`${selected ? 'text-white' : ''} h-[20px] border-r border-b border-[#c0c0c0] pl-[4px]`}>
                      <span className="flex items-center gap-[5px] leading-[16px]">
                        <TrendArrow up={up} />
                        {name}
                      </span>
                    </td>
                    <td className={`${color} border-r border-b border-[#c0c0c0] pr-[3px] text-right leading-[16px]`}>{bid}</td>
                    <td className={`${color} border-b border-[#c0c0c0] pr-[4px] text-right leading-[16px]`}>{ask}</td>
                  </tr>
                );
              })}
            </tbody>
          </table>
        </div>
        <Scrollbar before="flex-[49]" thumb="flex-[368]" after="flex-[206]" grip />
      </div>
      <div className="h-[24px] shrink-0 border-t border-black pl-[2px]">
        <Tabs label="Обзор рынка" items={['Символы', 'Тиковый график']} value={tab} onChange={setTab} />
      </div>
    </section>
  );
}

function Navigator() {
  return (
    <section className="flex w-[29px] shrink-0 flex-col overflow-hidden pt-[2px] pr-[4px] pl-[4px]">
      <div className="flex h-[13px] shrink-0 items-center">
        <h2 className="h-full w-[10px] bg-[#ccdbea] pl-px leading-[13px] text-[#44546a]">Н</h2>
        <CloseMark label="Закрыть навигатор" />
      </div>
      <div className="mt-px flex min-h-0 flex-1 justify-end border-t border-l border-[#8c8c8c] bg-white">
        <Scrollbar before="flex-[2]" thumb="flex-[602]" after="flex-[19]" grip />
      </div>
      <div className="h-[24px] shrink-0 overflow-hidden border-t border-black pl-[2px]">
        <span className="-mt-px flex h-[20px] w-[60px] items-center border-b-2 border-l border-black bg-white pl-[9px]">Общие</span>
      </div>
    </section>
  );
}

function Chart() {
  return (
    <div className="relative flex min-h-0 flex-1 flex-col overflow-hidden border-t-2 border-r-2 border-b border-l-2 border-t-[#6a6a6a] border-r-white border-b-white border-l-[#6a6a6a] bg-black pt-px pl-[2px] text-[9px] text-white">
      <div className="flex min-h-0 flex-1">
        <div className="relative min-w-0 flex-1 border border-white">
          <svg className="absolute inset-0 h-full w-full" shapeRendering="crispEdges" role="img" aria-label="График GBPNZD H1">
            <g stroke="#778899" strokeDasharray="3 3">
              {prices.map((p, i) => (
                <line key={p} x1="1" x2="100%" y1={i * 33 + 24.5} y2={i * 33 + 24.5} />
              ))}
              {Array.from({ length: 42 }, (_, i) => (
                <line key={i} x1={i * 32 + 32.5} x2={i * 32 + 32.5} y1="0" y2="100%" />
              ))}
            </g>
            <line x1="0" x2="100%" y1="119.5" y2="119.5" stroke="#778899" />
            <path d={barsPath} stroke="#10e810" />
          </svg>
          <p className="absolute top-px left-[3px] flex items-center gap-[4px] leading-[14px] whitespace-pre">
            <svg width="8" height="5" viewBox="0 0 8 5" aria-hidden="true">
              <path d="M0 0h8L4 4.500z" fill="#fff" />
            </svg>
            {'GBPNZD,H1  1.98893 1.99207 1.98879 1.99163'}
          </p>
        </div>
        <ul className="relative w-[42px] shrink-0 overflow-hidden pt-[8px]">
          {prices.map((p) => (
            <li key={p} className="flex h-[33px] items-center gap-[3px]">
              <span className="h-px w-[2px] bg-white" />
              {p}
            </li>
          ))}
          <li className="absolute top-[114px] right-0 left-[1px] h-[12px] bg-white pl-[4px] leading-[12px] text-black">1.99163</li>
        </ul>
      </div>
      <ul className="flex h-[18px] shrink-0">
        {times.map((t) => (
          <li key={t} className="w-[64px] shrink-0 whitespace-nowrap">
            <span className="ml-px block h-[3px] w-px bg-white" />
            <span className="block leading-[14px]">{t}</span>
          </li>
        ))}
      </ul>
      <svg width="12" height="18" viewBox="0 0 12 18" aria-hidden="true" className="absolute right-[69px] bottom-[129px]">
        <path d="M.5.5v14l3.300-3 2.200 5.500 2.300-1L6 10.500h5z" fill="#fff" stroke="#ddd" strokeWidth=".5" />
      </svg>
    </div>
  );
}

function Terminal() {
  const [tab, setTab] = useState('История Счета');
  return (
    <section className="flex h-[140px] shrink-0 border-t border-b border-t-white border-b-[#a0a0a0] pt-[4px]">
      <div className="flex w-[15px] shrink-0 flex-col">
        <CloseMark label="Закрыть терминал" />
        <div className="mb-px flex min-h-0 w-[14px] flex-1 items-center bg-linear-to-b from-[#d6e4f2] to-[#bccfe0]">
          <h2 className="h-full rotate-180 pt-[2px] leading-[14px] text-[#44546a] [writing-mode:vertical-rl]">Терминал</h2>
        </div>
      </div>
      <div className="flex min-w-0 flex-1 flex-col pr-[4px]">
        <div className="flex min-h-0 flex-1 border-t border-l border-[#8c8c8c] bg-white">
          <div className="min-w-0 flex-1 overflow-hidden">
            <table className="w-full table-fixed border-separate border-spacing-0">
              <thead>
                <tr className="bg-linear-to-b from-white to-[#f0f2f5]">
                  {orderCols.map((c, i) => (
                    <th
                      key={i}
                      className={`${orderWidths[i]} ${i ? 'pr-[5px] text-right' : 'pl-[6px] text-left'} ${i === 11 ? '' : 'border-r'} h-[24px] border-b border-[#d0d0d0] pt-px font-normal`}
                    >
                      {c}
                      {i ? null : <span className="ml-[14px] text-[#888]">/</span>}
                    </th>
                  ))}
                </tr>
              </thead>
              <tbody>
                {orders.map((row) => (
                  <tr key={row[0]} className="even:bg-[#eaeaea]">
                    {row.map((cell, i) => (
                      <td
                        key={i}
                        className={`${i ? 'pr-[3px] text-right' : 'pl-[3px]'} ${i === 11 ? '' : 'border-r'} h-[20px] border-b border-[#c0c0c0] leading-[16px]`}
                      >
                        {i ? (
                          cell
                        ) : (
                          <span className="flex items-center gap-[7px]">
                            <svg width="14" height="16" viewBox="0 0 14 16" fill="none" aria-hidden="true">
                              <path d="M.8 1h7.700l3 3v10.500H.8z" fill="#fff" stroke="#555" />
                              <path d="M8.500 1v3h3" stroke="#555" />
                              <circle cx="10.500" cy="12" r="3.200" fill="#e8481c" stroke="#9c2c0c" strokeWidth=".7" />
                            </svg>
                            {cell}
                          </span>
                        )}
                      </td>
                    ))}
                  </tr>
                ))}
              </tbody>
            </table>
          </div>
          <Scrollbar before="flex-[47]" thumb="flex-[15]" after="flex-[15]" />
        </div>
        <div className="h-[23px] shrink-0 border-t border-black pl-[2px]">
          <Tabs
            label="Терминал"
            items={['Торговля', 'История Счета', 'Алерты', 'Почтовый ящик', 'Сигналы', 'Code Base', 'Эксперты', 'Журнал']}
            value={tab}
            onChange={setTab}
          />
        </div>
      </div>
    </section>
  );
}

function StatusBar() {
  return (
    <footer className="flex h-[21px] shrink-0 items-stretch border-t border-white">
      <span className="flex flex-1 items-center pt-[2px] pl-[2px]">Для справки, нажмите F1</span>
      <span className="my-[2px] flex w-[116px] items-center border-l border-[#a0a0a0] pt-[2px] pl-[5px]">Default</span>
      <span className="my-[2px] w-[102px] border-l border-[#a0a0a0]" />
      <span className="my-[2px] w-[71px] border-l border-[#a0a0a0]" />
      <span className="my-[2px] w-[71px] border-l border-[#a0a0a0]" />
      <span className="my-[2px] w-[68px] border-l border-[#a0a0a0]" />
      <span className="my-[2px] w-[70px] border-l border-[#a0a0a0]" />
      <span className="my-[2px] w-[66px] border-l border-[#a0a0a0]" />
      <span className="my-[2px] flex w-[148px] items-center gap-[33px] border-l border-[#a0a0a0] pt-[2px] pl-[5px]">
        <svg width="24" height="13" viewBox="0 0 24 13" aria-hidden="true" shapeRendering="crispEdges">
          {[8, 8, 7, 6, 5, 4, 3, 2].map((h, i) => (
            <g key={i}>
              <rect x={i * 3} y="0" width="2" height={h} fill="#6f8a10" />
              <rect x={i * 3} y={h + 1} width="2" height={12 - h} fill="#123f66" />
            </g>
          ))}
        </svg>
        2497/0 kb
      </span>
      <svg width="14" height="14" viewBox="0 0 14 14" aria-hidden="true" className="self-end">
        <path d="M0 14L14 0M3 14L14 3M6 14l8-8M9 14l5-5" stroke="#999" />
      </svg>
    </footer>
  );
}

export default function App() {
  const [chartTab, setChartTab] = useState('GBPNZD,H1');
  return (
    <main className="flex h-screen overflow-hidden bg-white p-[52px] font-['DejaVu_Sans_Condensed','Noto_Sans',sans-serif] text-[11px] leading-[14px] text-black">
      <div className="flex min-w-0 flex-1 flex-col bg-[#f0f0f0] shadow-[0_8px_38px_rgba(0,0,0,0.65)]">
        <TitleBar />
        <MenuBar />
        <Toolbars />
        <div className="flex min-h-0 flex-1 border-y border-[#a0a0a0]">
          <MarketWatch />
          <Navigator />
          <div className="flex min-w-0 flex-1 flex-col">
            <Chart />
            <div className="flex h-[20px] shrink-0 justify-between border-t border-l border-t-black border-l-[#a0a0a0] pl-[3px]">
              <Tabs
                label="Графики"
                items={['EURUSD,M5', 'GBPUSD,M5', 'EURJPY,M5', 'USDJPY,M5', 'AUDUSD,M5', 'EURAUD,M5', 'GBPJPY,M5', 'GBPNZD,H1']}
                value={chartTab}
                onChange={setChartTab}
                wide
              />
              <svg width="22" height="7" viewBox="0 0 22 7" aria-hidden="true" className="mt-[7px] mr-[6px]">
                <path d="M4 0v7L0 3.500zM17 0v7l4-3.500z" fill="#8a8a8a" />
              </svg>
            </div>
          </div>
        </div>
        <Terminal />
        <StatusBar />
        <div className="relative h-[8px] shrink-0 overflow-hidden border-t border-black bg-linear-to-b from-[#4a6675] to-[#1b2e38]">
          <span className="absolute top-px left-[12px] h-[28px] w-[30px] rounded-full bg-[#a9c6dc]" />
          <span className="absolute top-[3px] left-[88px] h-[8px] w-[16px] -rotate-12 rounded-full bg-[#e8c83a]" />
          <span className="absolute top-[5px] left-[137px] h-[4px] w-[15px] bg-[#c9b48a]" />
          <span className="absolute top-[2px] left-[388px] h-[20px] w-[22px] rounded-full bg-white" />
          <span className="absolute top-0 left-[432px] flex gap-[5px]">
            <span className="h-[8px] w-[57px] border-x border-[#9fb0b8] bg-[#6d818b] bg-[radial-gradient(circle_at_50%_100%,#e8543c_6px,transparent_7px)]" />
            <span className="h-[8px] w-[57px] border-x border-[#9fb0b8] bg-[#6d818b] bg-[radial-gradient(circle_at_50%_100%,#4fd51c_8px,transparent_9px)]" />
            <span className="h-[8px] w-[57px] border-x border-[#9fb0b8] bg-[#6d818b] bg-[radial-gradient(circle_at_50%_100%,#1d7a3c_5px,#fff_6px,transparent_8px)]" />
            <span className="h-[8px] w-[57px] border-x border-[#9fb0b8] bg-[#6d818b] bg-[radial-gradient(circle_at_40%_100%,#5aa9e0_8px,transparent_9px)]" />
          </span>
        </div>
      </div>
    </main>
  );
}
